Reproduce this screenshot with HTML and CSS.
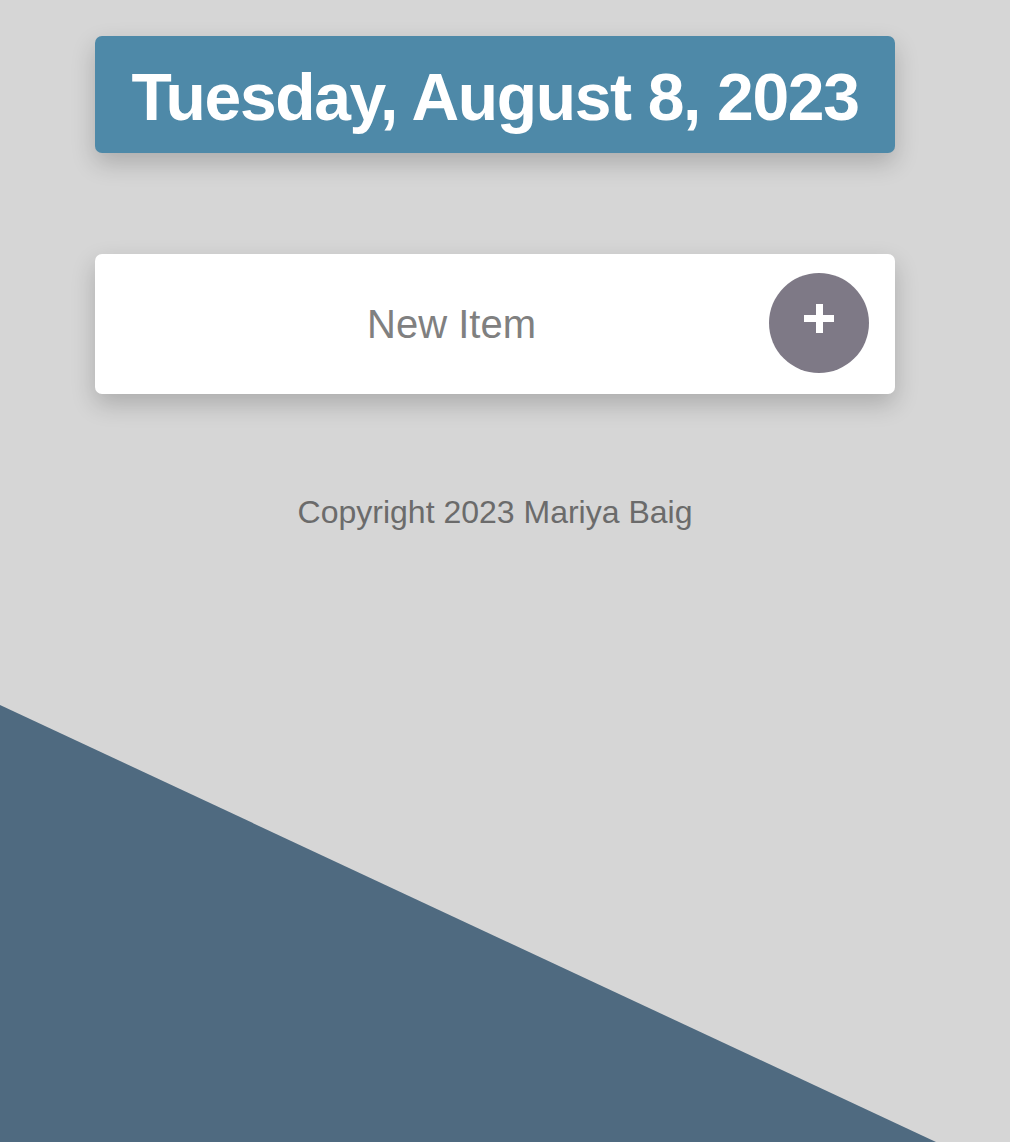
FILE: index.html
```html
<!DOCTYPE html>
<html lang="en">
<head>
<meta charset="utf-8">
<title>To-Do List</title>
<link rel="stylesheet" href="styles.css">
</head>
<body>
<div class="backdrop"></div>
<main class="page">
  <header class="heading">
    <h1>Tuesday, August 8, 2023</h1>
  </header>
  <form class="item-form">
    <input class="item-input" type="text" name="newItem" placeholder="New Item" autocomplete="off">
    <button class="add-btn" type="button" aria-label="Add"><span class="plus"></span></button>
  </form>
  <footer class="footer">
    <p>Copyright 2023 Mariya Baig</p>
  </footer>
</main>
</body>
</html>
```

FILE: styles.css
```css
html, body {
  margin: 0;
  padding: 0;
}

body {
  background: #d6d6d6;
  min-height: 100vh;
  font-family: "Liberation Sans", Arial, Helvetica, sans-serif;
  position: relative;
  overflow: hidden;
}

.backdrop {
  position: fixed;
  inset: 0;
  background: #4f6a80;
  clip-path: polygon(0 705px, 936px 100%, 0 100%);
  z-index: 0;
}

.page {
  position: relative;
  z-index: 1;
  width: 800px;
  margin: 36px 0 0 95px;
  display: flex;
  flex-direction: column;
}

.heading {
  background: #4e89a8;
  border-radius: 7px;
  box-shadow: 0 10px 24px rgba(0, 0, 0, 0.2);
  padding: 29px 0 23px;
  text-align: center;
}

.heading h1 {
  margin: 0;
  color: #ffffff;
  font-size: 66px;
  line-height: 65px;
  font-weight: 700;
  letter-spacing: -1.35px;
}

.item-form {
  margin-top: 101px;
  height: 140px;
  background: #ffffff;
  border-radius: 7px;
  box-shadow: 0 10px 24px rgba(0, 0, 0, 0.2);
  display: flex;
  align-items: center;
  padding: 0 26px 0 39px;
  box-sizing: border-box;
}

.item-input {
  flex: 1;
  min-width: 0;
  border: none;
  outline: none;
  background: transparent;
  text-align: center;
  font-family: "Liberation Sans", Arial, Helvetica, sans-serif;
  font-size: 40px;
  line-height: 40px;
  height: 40px;
  padding: 0;
  color: #808080;
}

.item-input::placeholder {
  color: #808080;
  opacity: 1;
}

.add-btn {
  flex: none;
  width: 100px;
  height: 100px;
  border-radius: 50%;
  border: none;
  background: #7e7986;
  display: flex;
  align-items: center;
  justify-content: center;
  padding: 0 0 10px;
  margin-bottom: 2px;
  cursor: pointer;
}

.plus {
  position: relative;
  width: 30px;
  height: 29px;
}

.plus::before,
.plus::after {
  content: "";
  position: absolute;
  background: #ffffff;
}

.plus::before {
  left: 0;
  right: 0;
  top: 11px;
  height: 7px;
}

.plus::after {
  top: 0;
  bottom: 0;
  left: 12px;
  width: 7px;
}

.footer {
  margin-top: 102px;
  text-align: center;
}

.footer p {
  margin: 0;
  font-size: 32px;
  line-height: 32px;
  color: #6b6b6b;
}
```
